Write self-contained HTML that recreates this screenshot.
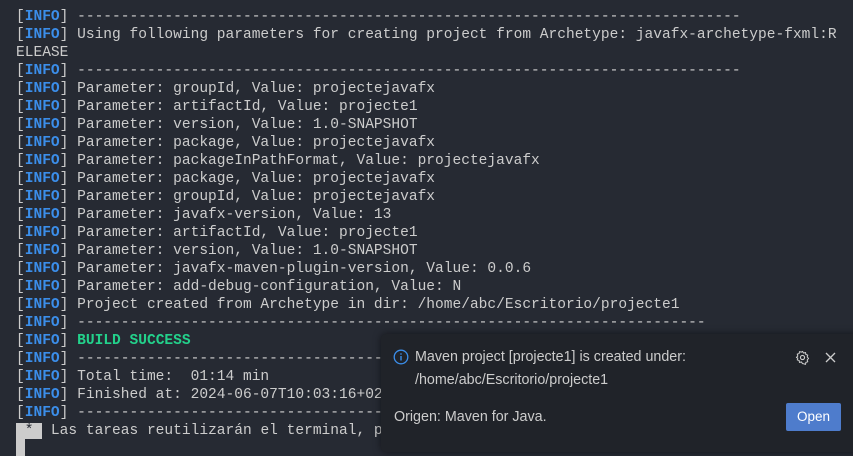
<!DOCTYPE html>
<html><head><meta charset="utf-8"><style>
html,body{margin:0;padding:0;width:853px;height:456px;overflow:hidden;background:#262a33;}
#t{position:absolute;left:16px;top:8px;font-family:"Liberation Mono",monospace;font-size:14.55px;line-height:18px;color:#cccccc;white-space:pre;}
.b{color:#3b8eea;font-weight:bold;}
.g{color:#23d18b;font-weight:bold;}
.inv{background:#cccccc;color:#262a33;}
#cur{position:absolute;left:16px;top:438px;width:9px;height:18px;background:#cccccc;}
#n{position:absolute;left:381px;top:334px;width:480px;height:118px;background:#202329;border-radius:5px;box-shadow:0 0 8px rgba(0,0,0,.5);font-family:"Liberation Sans","DejaVu Sans",sans-serif;font-size:14.3px;color:#cccccc;}
#btn{position:absolute;left:405px;top:69px;width:55px;height:28px;background:#4e7ccc;border-radius:2px;color:#fff;text-align:center;line-height:28px;font-size:13.5px;}
</style></head><body>
<div id="t">[<span class="b">INFO</span>] ----------------------------------------------------------------------------
[<span class="b">INFO</span>] Using following parameters for creating project from Archetype: javafx-archetype-fxml:R
ELEASE
[<span class="b">INFO</span>] ----------------------------------------------------------------------------
[<span class="b">INFO</span>] Parameter: groupId, Value: projectejavafx
[<span class="b">INFO</span>] Parameter: artifactId, Value: projecte1
[<span class="b">INFO</span>] Parameter: version, Value: 1.0-SNAPSHOT
[<span class="b">INFO</span>] Parameter: package, Value: projectejavafx
[<span class="b">INFO</span>] Parameter: packageInPathFormat, Value: projectejavafx
[<span class="b">INFO</span>] Parameter: package, Value: projectejavafx
[<span class="b">INFO</span>] Parameter: groupId, Value: projectejavafx
[<span class="b">INFO</span>] Parameter: javafx-version, Value: 13
[<span class="b">INFO</span>] Parameter: artifactId, Value: projecte1
[<span class="b">INFO</span>] Parameter: version, Value: 1.0-SNAPSHOT
[<span class="b">INFO</span>] Parameter: javafx-maven-plugin-version, Value: 0.0.6
[<span class="b">INFO</span>] Parameter: add-debug-configuration, Value: N
[<span class="b">INFO</span>] Project created from Archetype in dir: /home/abc/Escritorio/projecte1
[<span class="b">INFO</span>] ------------------------------------------------------------------------
[<span class="b">INFO</span>] <span class="g">BUILD SUCCESS</span>
[<span class="b">INFO</span>] ------------------------------------------------------------------------
[<span class="b">INFO</span>] Total time:  01:14 min
[<span class="b">INFO</span>] Finished at: 2024-06-07T10:03:16+02:00
[<span class="b">INFO</span>] ------------------------------------------------------------------------
<span class="inv"> * </span> Las tareas reutilizarán el terminal, presione cualquier tecla para cerrarlo.</div>
<div id="cur"></div>
<div id="n">
<svg style="position:absolute;left:12px;top:15px" width="16" height="16" viewBox="0 0 16 16"><circle cx="8" cy="8" r="6.8" fill="none" stroke="#3b8eea" stroke-width="1.3"/><rect x="7.3" y="7" width="1.4" height="4.5" fill="#3b8eea"/><rect x="7.3" y="4.3" width="1.4" height="1.4" fill="#3b8eea"/></svg>
<div style="position:absolute;left:34px;top:15px;">Maven project [projecte1] is created under:</div>
<div style="position:absolute;left:34px;top:38px;">/home/abc/Escritorio/projecte1</div>
<svg style="position:absolute;left:414px;top:16px" width="15" height="15" viewBox="0 0 16 16"><circle cx="8" cy="8" r="2.2" fill="none" stroke="#ccc" stroke-width="1.2"/><path d="M8 1.5l1.2 1.8 2-.6.4 2.1 2 .6-.6 2 1.5 1.6-1.5 1.6.6 2-2 .6-.4 2.1-2-.6L8 14.5l-1.2-1.8-2 .6-.4-2.1-2-.6.6-2L1.5 8l1.5-1.6-.6-2 2-.6.4-2.1 2 .6z" fill="none" stroke="#ccc" stroke-width="1.1" stroke-linejoin="round"/></svg>
<svg style="position:absolute;left:444px;top:18px" width="11" height="11" viewBox="0 0 11 11"><path d="M1 1L10 10M10 1L1 10" stroke="#ccc" stroke-width="1.3"/></svg>
<div style="position:absolute;left:13px;top:75px;">Origen: Maven for Java.</div>
<div id="btn">Open</div>
</div>
</body></html>
